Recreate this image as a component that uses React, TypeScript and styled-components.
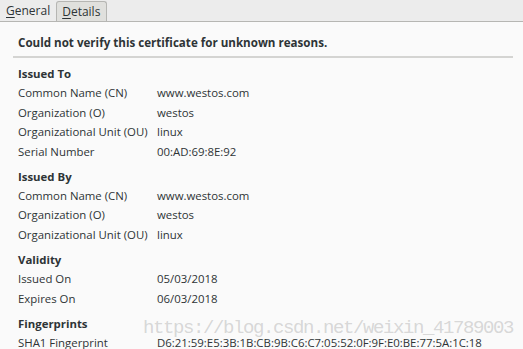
import React from "react";
import styled, { createGlobalStyle } from "styled-components";

interface Field {
  label: string;
  value: string;
}

interface Section {
  title: string;
  fields: Field[];
}

const sections: Section[] = [
  {
    title: "Issued To",
    fields: [
      { label: "Common Name (CN)", value: "www.westos.com" },
      { label: "Organization (O)", value: "westos" },
      { label: "Organizational Unit (OU)", value: "linux" },
      { label: "Serial Number", value: "00:AD:69:8E:92" },
    ],
  },
  {
    title: "Issued By",
    fields: [
      { label: "Common Name (CN)", value: "www.westos.com" },
      { label: "Organization (O)", value: "westos" },
      { label: "Organizational Unit (OU)", value: "linux" },
    ],
  },
  {
    title: "Validity",
    fields: [
      { label: "Issued On", value: "05/03/2018" },
      { label: "Expires On", value: "06/03/2018" },
    ],
  },
  {
    title: "Fingerprints",
    fields: [
      {
        label: "SHA1 Fingerprint",
        value: "D6:21:59:E5:3B:1B:CB:9B:C6:C7:05:52:0F:9F:E0:BE:77:5A:1C:18",
      },
    ],
  },
];

function App() {
  return (
    <Wrapper>
      <GlobalStyle />
      <TabBar>
        <Tab active>
          <u>G</u>eneral
        </Tab>
        <Tab>
          <u>D</u>etails
        </Tab>
      </TabBar>
      <Content>
        <Warning>Could not verify this certificate for unknown reasons.</Warning>
        <Divider />
        {sections.map((s) => (
          <Group key={s.title}>
            <GroupTitle>{s.title}</GroupTitle>
            {s.fields.map((f) => (
              <Row key={f.label}>
                <Label>{f.label}</Label>
                <Value>{f.value}</Value>
              </Row>
            ))}
          </Group>
        ))}
        <Watermark>https://blog.csdn.net/weixin_41789003</Watermark>
      </Content>
    </Wrapper>
  );
}

export default App;

const GlobalStyle = createGlobalStyle`
  html, body {
    margin: 0;
    padding: 0;
    background: #fafafa;
    overflow: hidden;
  }
`;
const Wrapper = styled.div`
  width: 523px;
  height: 349px;
  overflow: hidden;
  font-family: "Open Sans", "DejaVu Sans", sans-serif;
  font-size: 11.4px;
  color: #2e3436;
  background: #fafafa;
`;
const TabBar = styled.div`
  display: flex;
  height: 21px;
  background: #ececec;
  border-bottom: 1px solid #b6b6b3;
  padding-left: 1px;
`;
const Tab = styled.div<{ active?: boolean }>`
  display: flex;
  align-items: center;
  padding: 0 6px 0 5px;
  margin-top: ${(p) => (p.active ? "0" : "1px")};
  font-size: 12px;
  background: ${(p) => (p.active ? "#ececec" : "#e0e0dd")};
  border: ${(p) => (p.active ? "none" : "1px solid #b6b6b3")};
  border-bottom: none;
  border-radius: 3px 3px 0 0;
  u {
    text-decoration-thickness: 1px;
    text-underline-offset: 2px;
  }
`;
const Content = styled.div`
  position: relative;
  padding: 13px 10px 0 18px;
`;
const Warning = styled.div`
  font-weight: bold;
  font-size: 11.6px;
  height: 16px;
  line-height: 16px;
`;
const Divider = styled.div`
  height: 2px;
  background: #d4d4d2;
  margin: 5px 0 6px -5px;
`;
const Group = styled.section`
  margin-bottom: 5.8px;
`;
const GroupTitle = styled.div`
  font-weight: bold;
  height: 19px;
  line-height: 19px;
`;
const Row = styled.div`
  display: flex;
  height: 19.5px;
  line-height: 19.5px;
`;
const Label = styled.div`
  width: 139px;
  flex-shrink: 0;
`;
const Value = styled.div`
  white-space: nowrap;
`;
const Watermark = styled.div`
  position: absolute;
  left: 143px;
  top: 295px;
  font-family: "Liberation Mono", "DejaVu Sans Mono", monospace;
  font-size: 19px;
  letter-spacing: -1.4px;
  color: rgba(160, 160, 160, 0.4);
  white-space: nowrap;
  pointer-events: none;
`;
